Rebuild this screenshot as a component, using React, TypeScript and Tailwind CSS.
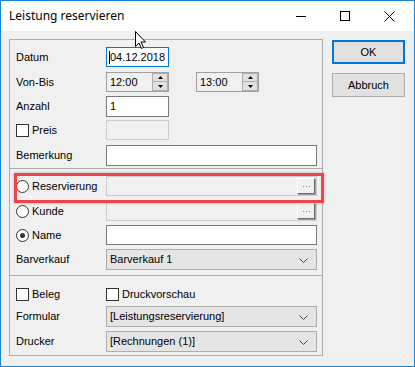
import React from "react";

const ui = { fontFamily: '"Liberation Sans", Arial, sans-serif' };

function Label({ children }: { children: React.ReactNode }) {
  return <div className="w-[90px] shrink-0 text-[11px] text-black">{children}</div>;
}

function Radio({ checked = false }: { checked?: boolean }) {
  return (
    <div className="flex h-[13px] w-[13px] shrink-0 items-center justify-center rounded-full border border-[#333] bg-white">
      {checked && <div className="h-[5px] w-[5px] rounded-full bg-[#333]" />}
    </div>
  );
}

function Check() {
  return <div className="h-[13px] w-[13px] shrink-0 border border-[#333] bg-white" />;
}

function Chevron() {
  return (
    <svg width="9" height="5" viewBox="0 0 9 5" className="absolute right-[8px] top-[8px]">
      <path d="M0.5 0.5 L4.5 4.5 L8.5 0.5" fill="none" stroke="#444" strokeWidth="1" />
    </svg>
  );
}

function Combo({ text }: { text: string }) {
  return (
    <div className="relative flex h-[21px] w-[211px] items-center border border-[#adadad] bg-[#e5e5e5] pl-[3px] text-[11px] text-black">
      {text}
      <Chevron />
    </div>
  );
}

function Dots() {
  return (
    <div className="absolute right-[1px] top-[1px] flex h-[16px] w-[18px] items-center justify-center gap-[2px] border-b border-r border-b-[#696969] border-r-[#696969] border-l border-t border-l-white border-t-white bg-[#f0f0f0] shadow-[1px_1px_0_#a0a0a0]">
      <span className="h-[1px] w-[1px] bg-[#888]" />
      <span className="h-[1px] w-[1px] bg-[#888]" />
      <span className="h-[1px] w-[1px] bg-[#888]" />
    </div>
  );
}

function Spin({ value }: { value: string }) {
  return (
    <div className="relative flex h-[20px] w-[63px] items-center border border-[#a0a0a0] bg-[#f0f0f0] pl-[3px] text-[11px]">
      {value}
      <div className="absolute right-0 top-0 flex h-[18px] w-[16px] flex-col">
        <div className="flex h-[9px] items-center justify-center border border-[#adadad] bg-[#e1e1e1]">
          <svg width="5" height="3" viewBox="0 0 5 3"><path d="M0 3 L2.5 0 L5 3 Z" fill="#000" /></svg>
        </div>
        <div className="flex h-[9px] items-center justify-center border border-t-0 border-[#adadad] bg-[#e1e1e1]">
          <svg width="5" height="3" viewBox="0 0 5 3"><path d="M0 0 L2.5 3 L5 0 Z" fill="#000" /></svg>
        </div>
      </div>
    </div>
  );
}

export default function App() {
  return (
    <div style={ui} className="relative flex h-[367px] w-[415px] flex-col overflow-hidden border border-[#1883d7] bg-[#f0f0f0] text-black">
      {/* title bar */}
      <div className="flex h-[30px] items-center bg-white pr-[3px]">
        <span className="ml-[8px] text-[12px] text-black" style={{ fontFamily: '"Noto Sans", "Liberation Sans", sans-serif' }}>
          Leistung reservieren
        </span>
        <div className="ml-auto flex">
          <div className="flex h-[30px] w-[44px] items-center justify-center">
            <svg width="10" height="10" viewBox="0 0 10 10"><path d="M0 5.5 H10" stroke="#000" strokeWidth="1" /></svg>
          </div>
          <div className="flex h-[30px] w-[44px] items-center justify-center">
            <svg width="10" height="10" viewBox="0 0 10 10"><rect x="0.5" y="0.5" width="9" height="9" fill="none" stroke="#000" strokeWidth="1" /></svg>
          </div>
          <div className="flex h-[30px] w-[44px] items-center justify-center">
            <svg width="11" height="11" viewBox="0 0 11 11"><path d="M0.5 0.5 L10.5 10.5 M10.5 0.5 L0.5 10.5" stroke="#000" strokeWidth="1" /></svg>
          </div>
        </div>
      </div>

      {/* body */}
      <div className="flex pl-[8px] pt-[8px]">
        <div className="flex w-[314px] flex-col border border-[#adadad]">
          {/* section 1 */}
          <div className="flex flex-col pb-[2px] pl-[6px] pr-[5px] pt-[7px]">
            <div className="flex h-[20px] items-center">
              <Label>Datum</Label>
              <div className="flex h-[20px] w-[63px] items-center border border-[#0078d7] bg-white pl-[2px] text-[11px]">
                <span className="h-[13px] w-[1px] bg-black" />
                04.12.2018
              </div>
            </div>
            <div className="mt-[5px] flex h-[20px] items-center">
              <Label>Von-Bis</Label>
              <Spin value="12:00" />
              <div className="ml-[27px]">
                <Spin value="13:00" />
              </div>
            </div>
            <div className="mt-[4px] flex h-[21px] items-center">
              <Label>Anzahl</Label>
              <div className="flex h-[21px] w-[63px] items-center border border-[#7a7a7a] bg-white pl-[3px] text-[11px]">1</div>
            </div>
            <div className="mt-[3px] flex h-[20px] items-center">
              <div className="flex w-[90px] items-center gap-[3px] text-[11px]">
                <Check />
                Preis
              </div>
              <div className="h-[20px] w-[63px] border border-[#cccccc] bg-[#f0f0f0]" />
            </div>
            <div className="mt-[5px] flex h-[21px] items-center">
              <Label>Bemerkung</Label>
              <div className="h-[21px] w-[211px] border border-[#7a7a7a] bg-white" />
            </div>
          </div>

          {/* section 2 */}
          <div className="flex flex-col border-t border-[#adadad] pb-[5px] pl-[6px] pr-[5px] pt-[7px]">
            <div className="flex h-[20px] items-center">
              <div className="flex w-[90px] items-center gap-[3px] text-[11px]">
                <Radio />
                Reservierung
              </div>
              <div className="relative h-[20px] w-[211px] border border-[#cccccc] bg-[#f0f0f0]">
                <Dots />
              </div>
            </div>
            <div className="mt-[5px] flex h-[20px] items-center">
              <div className="flex w-[90px] items-center gap-[3px] text-[11px]">
                <Radio />
                Kunde
              </div>
              <div className="relative h-[20px] w-[211px] border border-[#cccccc] bg-[#f0f0f0]">
                <Dots />
              </div>
            </div>
            <div className="mt-[4px] flex h-[20px] items-center">
              <div className="flex w-[90px] items-center gap-[3px] text-[11px]">
                <Radio checked />
                Name
              </div>
              <div className="h-[20px] w-[211px] border border-[#7a7a7a] bg-white" />
            </div>
            <div className="mt-[4px] flex h-[21px] items-center">
              <Label>Barverkauf</Label>
              <Combo text="Barverkauf 1" />
            </div>
          </div>

          {/* section 3 */}
          <div className="flex flex-col border-t border-[#adadad] pb-[3px] pl-[6px] pr-[5px] pt-[8px]">
            <div className="flex h-[20px] items-center text-[11px]">
              <div className="flex w-[90px] items-center gap-[3px]">
                <Check />
                Beleg
              </div>
              <div className="flex items-center gap-[3px]">
                <Check />
                Druckvorschau
              </div>
            </div>
            <div className="mt-[2px] flex h-[21px] items-center">
              <Label>Formular</Label>
              <Combo text="[Leistungsreservierung]" />
            </div>
            <div className="mt-[4px] flex h-[21px] items-center">
              <Label>Drucker</Label>
              <Combo text="[Rechnungen (1)]" />
            </div>
          </div>
        </div>

        {/* buttons */}
        <div className="ml-[9px] mt-[1px] flex flex-col gap-[9px]">
          <button className="flex h-[24px] w-[73px] items-center justify-center border-2 border-[#0078d7] bg-[#e1e1e1] text-[11px] text-black">
            OK
          </button>
          <button className="flex h-[24px] w-[73px] items-center justify-center border border-[#adadad] bg-[#e1e1e1] text-[11px] text-black">
            Abbruch
          </button>
        </div>
      </div>

      {/* highlight annotation */}
      <div className="pointer-events-none absolute left-[13px] top-[172px] h-[30px] w-[310px] border-[3px] border-[#ef4249] shadow-[0_0_3px_rgba(0,0,0,0.25)]" />

      {/* mouse cursor */}
      <svg width="13" height="20" viewBox="0 0 13 20" className="pointer-events-none absolute left-[134px] top-[30px]">
        <path d="M0.5 0.5 L0.5 15.5 L4 12 L6.5 17.5 L8.5 16.5 L6 11 L10.5 11 Z" fill="#fff" stroke="#000" strokeWidth="1" />
      </svg>
    </div>
  );
}
